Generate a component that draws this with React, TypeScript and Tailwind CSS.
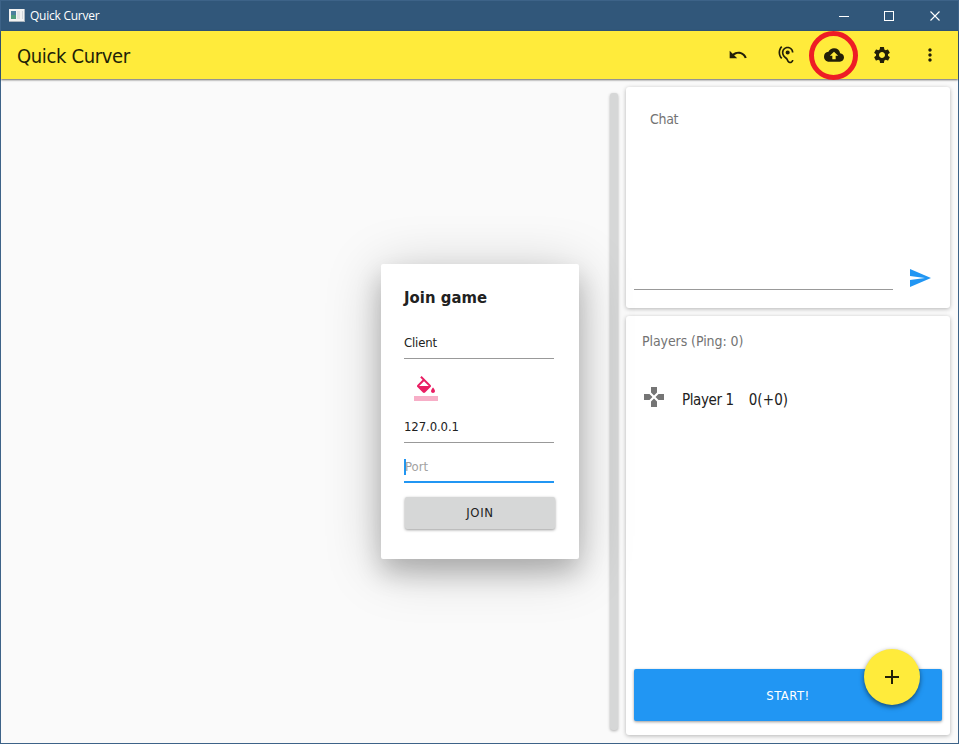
import React from "react";
import {
  MdUndo, MdHearing, MdCloudUpload, MdSettings, MdMoreVert, MdSend, MdGamepad, MdAdd,
} from "react-icons/md";

const card = "rounded-[3px] bg-white shadow-[0_1px_4px_rgba(0,0,0,0.28)]";

function TitleBar() {
  return (
    <div className="flex h-[31px] shrink-0 items-center border border-b-0 border-[#3d6388] bg-[#31577a] pl-2 text-white">
      <svg className="-mt-[2px]" width="16" height="13" viewBox="0 0 16 13" shapeRendering="crispEdges">
        <rect width="16" height="13" fill="#a9b4bd" />
        <rect width="15" height="12" fill="#f2f2f2" />
        <rect x="2" y="2" width="5" height="8" fill="#4b7f9c" />
        <rect x="2" y="6" width="5" height="4" fill="#4f9c7c" />
        <rect x="8" y="2" width="3" height="8" fill="#e0e2e4" />
        <rect x="13" y="2" width="1" height="8" fill="#d4d7da" />
      </svg>
      <span className="ml-[5px] font-['Open_Sans',sans-serif] text-[12px] tracking-[-0.25px]">Quick Curver</span>
      <div className="ml-auto flex h-full items-center">
        <svg width="120" height="28" viewBox="838 1 120 28" fill="none" stroke="white">
          <path d="M839 15.5h10M884.5 10.5h9v9h-9z" shapeRendering="crispEdges" />
          <path d="M930.5 10.5l9 9M939.5 10.5l-9 9" strokeWidth="1.1" />
        </svg>
      </div>
    </div>
  );
}

function ToolBar() {
  return (
    <header className="relative z-10 flex h-[48px] shrink-0 items-center bg-[#ffeb3b] pl-4 pr-[4px] text-[#221f08] shadow-[0_1px_2px_rgba(0,0,0,0.6)]">
      <h1 className="mt-[2px] text-[20px] leading-6 tracking-[-0.36px]">Quick Curver</h1>
      <div className="ml-auto flex">
        <div className="flex size-12 items-center justify-center"><MdUndo size={20} /></div>
        <div className="flex size-12 items-center justify-center"><MdHearing size={20} /></div>
        <div className="relative flex size-12 items-center justify-center">
          <MdCloudUpload size={20} />
          <div className="absolute inset-0 -left-px size-[49px] rounded-full border-[5px] border-[#ee1c25]" />
        </div>
        <div className="flex size-12 items-center justify-center"><MdSettings size={20} /></div>
        <div className="flex size-12 items-center justify-center"><MdMoreVert size={20} /></div>
      </div>
    </header>
  );
}

function JoinDialog() {
  return (
    <div className="absolute left-[380px] top-[185px] z-20 flex h-[295px] w-[198px] flex-col rounded-[2px] bg-white px-[23px] pt-[23px] text-[13px] text-[#212121] shadow-[0_8px_56px_rgba(0,0,0,0.22),0_14px_26px_rgba(0,0,0,0.2)]">
      <h2 className="h-[24px] whitespace-nowrap text-[16.5px] font-bold leading-[22px] tracking-[0.05px]">Join game</h2>
      <div className="mt-[22px] h-[26px] w-[150px] border-b border-[#999] leading-[20px] tracking-[-0.15px]">Client</div>
      <svg className="ml-[10px] mt-[17px]" width="24" height="25" viewBox="0 0 24 25" fill="#e91e63">
        <path d="M16.56 8.94L7.62 0 6.21 1.41l2.38 2.38-5.15 5.15c-.59.59-.59 1.54 0 2.12l5.5 5.5c.29.29.68.44 1.06.44s.77-.15 1.06-.44l5.5-5.5c.59-.58.59-1.53 0-2.12zM5.21 10L10 5.21 14.79 10H5.21zM19 11.5s-2 2.17-2 3.5c0 1.1.9 2 2 2s2-.9 2-2c0-1.33-2-3.5-2-3.5z" />
        <path opacity=".36" d="M0 20h24v5H0z" />
      </svg>
      <div className="mt-[16px] h-[26px] w-[150px] border-b border-[#999] leading-[20px] tracking-[-0.1px]">127.0.0.1</div>
      <div className="mt-[14px] flex h-[26px] w-[150px] border-b-2 border-[#2196f3] leading-[20px] text-[#a2a2a2]">
        <i className="mt-[2px] h-4 w-[2px] bg-[#2196f3]" />
        <span className="-ml-px">Port</span>
      </div>
      <button className="ml-px mt-[14px] h-[32px] w-[150px] shrink-0 rounded-[2px] bg-[#d6d7d7] tracking-[0.7px] shadow-[0_1px_3px_rgba(0,0,0,0.4)]">JOIN</button>
    </div>
  );
}

function Chat() {
  return (
    <section className={`${card} flex h-[221px] flex-col`}>
      <h3 className="pl-6 pt-[22px] text-[14px] leading-5 tracking-[-0.3px] text-[#737373]">Chat</h3>
      <div className="mt-auto flex items-end pb-[18px] pl-2 pr-[18px]">
        <div className="h-8 w-[259px] border-b border-[#999]" />
        <MdSend size={24} className="ml-auto text-[#2196f3]" />
      </div>
    </section>
  );
}

function Players() {
  return (
    <section className={`${card} relative mt-2 flex h-[419px] flex-col`}>
      <h3 className="pl-4 pt-[15px] text-[14px] leading-5 tracking-[-0.08px] text-[#737373]">Players (Ping: 0)</h3>
      <div className="mt-[34px] flex items-start pl-4 text-[15px] leading-[22px] text-[#212121]">
        <MdGamepad size={24} className="text-[#757575]" />
        <span className="ml-4 mt-[4px] tracking-[-0.4px]">Player 1</span>
        <span className="ml-[15px] mt-[4px] tracking-[0.1px]">0(+0)</span>
      </div>
      <button className="mx-2 mb-[14px] mt-auto h-[52px] rounded-[2px] bg-[#2196f3] pt-[2px] text-[13px] tracking-[0.5px] text-white shadow-[0_1px_3px_rgba(0,0,0,0.4)]">START!</button>
      <button className="absolute bottom-[30px] right-[30px] flex size-14 items-center justify-center rounded-full bg-[#ffeb3b] text-[#221f08] shadow-[0_2px_5px_rgba(0,0,0,0.5)]">
        <MdAdd size={24} />
      </button>
    </section>
  );
}

export default function App() {
  return (
    <div className="flex h-[744px] w-[959px] flex-col overflow-hidden bg-[#fafafa] font-['DejaVu_Sans_Condensed','DejaVu_Sans',sans-serif]">
      <TitleBar />
      <div className="flex min-h-0 flex-1 flex-col border border-t-0 border-[#3d6388]">
        <ToolBar />
        <main className="relative flex flex-1 pt-[8px]">
          <JoinDialog />
          <div className="ml-[609px] mt-[6px] h-[637px] w-2 rounded-[3px] bg-[#d6d7d7] shadow-[0_1px_3px_rgba(0,0,0,0.3)]" />
          <div className="ml-2 w-[324px]">
            <Chat />
            <Players />
          </div>
        </main>
      </div>
    </div>
  );
}
